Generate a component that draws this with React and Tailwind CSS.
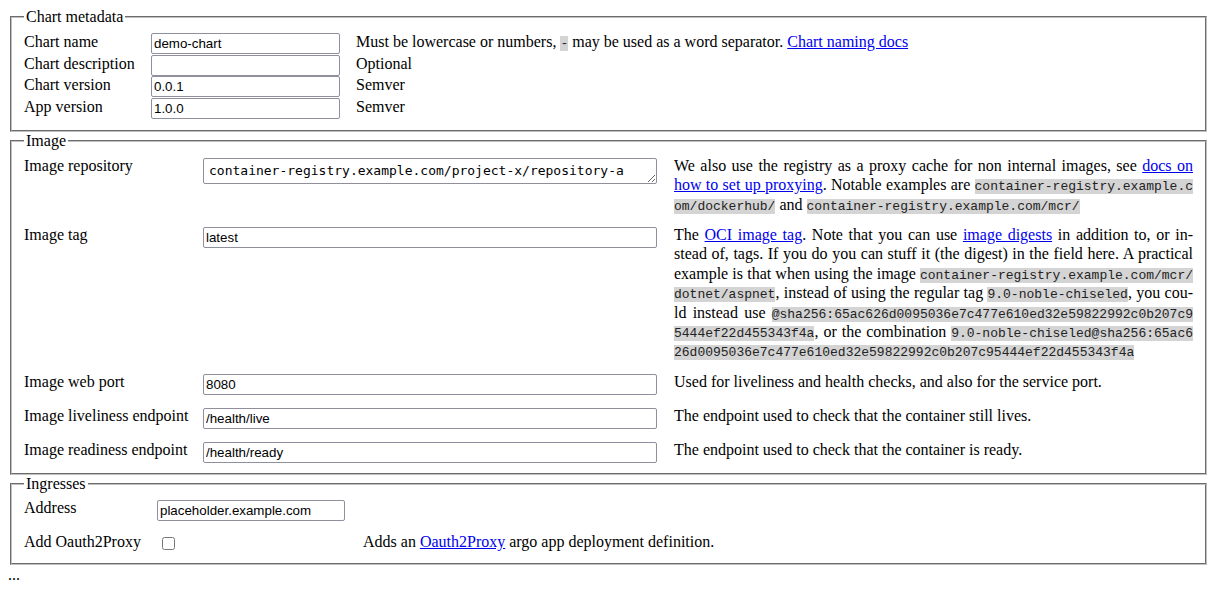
const serif = "font-['Liberation_Serif','Times_New_Roman',serif]";

function Code({ children }) {
  return (
    <code className="font-['Liberation_Mono','Courier_New',monospace] text-[13px] leading-[10px] bg-[#d4d4d4] text-[#222] break-all">
      {children}
    </code>
  );
}

function A({ children }) {
  return (
    <a href="#" className="text-[#0000ee] underline">
      {children}
    </a>
  );
}

function TextInput({ value, className = "" }) {
  return (
    <input
      type="text"
      defaultValue={value}
      className={`h-[21px] px-[2px] py-[1px] border border-[#8f8f9d] rounded-[2px] bg-white text-black font-['Liberation_Sans',Arial,sans-serif] text-[13.33px] leading-[15px] ${className}`}
    />
  );
}

function Fieldset({ legend, className = "", children }) {
  return (
    <fieldset className={`mx-[2px] px-3 pb-[10px] border-2 border-[#c0c0c0] [border-style:groove] ${className}`}>
      <legend className="px-[2px] leading-[18px]">{legend}</legend>
      {children}
    </fieldset>
  );
}

export default function App() {
  const meta = [
    {
      label: "Chart name",
      value: "demo-chart",
      desc: (
        <>
          Must be lowercase or numbers, <Code>-</Code> may be used as a word separator. <A>Chart naming docs</A>
        </>
      ),
    },
    { label: "Chart description", value: "", desc: "Optional" },
    { label: "Chart version", value: "0.0.1", desc: "Semver" },
    { label: "App version", value: "1.0.0", desc: "Semver" },
  ];

  return (
    <div lang="en" className={`${serif} text-[16px] text-black bg-white p-2 leading-[18px]`}>
      {/* CHART METADATA */}
      <Fieldset legend="Chart metadata">
        <div className="grid grid-cols-[111px_189px_1fr] gap-x-4 auto-rows-[21.7px] pt-[7px]">
          {meta.map((row) => (
            <div key={row.label} className="contents">
              <div className="leading-[18px] whitespace-nowrap">{row.label}</div>
              <TextInput value={row.value} className="w-[189px]" />
              <div className="leading-[18px]">{row.desc}</div>
            </div>
          ))}
        </div>
      </Fieldset>

      {/* IMAGE */}
      <Fieldset legend="Image">
        <div className="grid grid-cols-[162px_454px_1fr] gap-x-[17px] gap-y-[11px] pt-[6px] items-start">
          <div className="leading-[19.4px] whitespace-nowrap">Image repository</div>
          <textarea
            rows={1}
            defaultValue="container-registry.example.com/project-x/repository-a"
            className="mt-[2px] w-[454px] h-[26px] px-[5px] py-[3px] border border-[#8f8f9d] rounded-[2px] font-['DejaVu_Sans_Mono',monospace] text-[13px] leading-[18px] whitespace-nowrap overflow-hidden"
          />
          <div className="leading-[19.4px] text-justify hyphens-manual">
            We also use the registry as a proxy cache for non internal images, see <A>docs on how to set up proxying</A>. Notable examples are <Code>container-registry.example.com/dockerhub/</Code> and <Code>container-registry.example.com/mcr/</Code>
          </div>

          <div className="leading-[19.4px] whitespace-nowrap">Image tag</div>
          <TextInput value="latest" className="mt-[2px] w-[454px]" />
          <div className="leading-[19.4px] text-justify hyphens-manual">
            The <A>OCI image tag</A>. Note that you can use <A>image digests</A> in addition to, or in{"\u00AD"}stead of, tags. If you do you can stuff it (the digest) in the field here. A practical example is that when using the image <Code>container-registry.example.com/mcr/dotnet/aspnet</Code>, instead of using the regular tag <Code>9.0-noble-chiseled</Code>, you cou{"\u00AD"}ld instead use <Code>@sha256:65ac626d0095036e7c477e610ed32e59822992c0b207c95444ef22d455343f4a</Code>, or the combination <Code>9.0-noble-chiseled@sha256:65ac626d0095036e7c477e610ed32e59822992c0b207c95444ef22d455343f4a</Code>
          </div>

          {[
            ["Image web port", "8080", "Used for liveliness and health checks, and also for the service port."],
            ["Image liveliness endpoint", "/health/live", "The endpoint used to check that the container still lives."],
            ["Image readiness endpoint", "/health/ready", "The endpoint used to check that the container is ready."],
          ].map(([label, value, desc]) => (
            <div key={label} className="contents">
              <div className="leading-[19.4px] whitespace-nowrap">{label}</div>
              <TextInput value={value} className="mt-[2px] w-[454px]" />
              <div className="leading-[19.4px]">{desc}</div>
            </div>
          ))}
        </div>
      </Fieldset>

      {/* INGRESSES */}
      <Fieldset legend="Ingresses">
        <div className="grid grid-cols-[115px_188px_1fr] gap-x-[18px] gap-y-[11px] pt-[5px] items-start">
          <div className="leading-[19.4px] whitespace-nowrap">Address</div>
          <TextInput value="placeholder.example.com" className="mt-[2px] w-[188px]" />
          <div />

          <div className="leading-[19.4px] whitespace-nowrap">Add Oauth2Proxy</div>
          <div className="h-[21px]">
            <input type="checkbox" className="mt-[5px] ml-[5px] w-[13px] h-[13px]" />
          </div>
          <div className="leading-[19.4px]">
            Adds an <A>Oauth2Proxy</A> argo app deployment definition.
          </div>
        </div>
      </Fieldset>

      <div className="leading-[18px] pt-[1px]">...</div>
    </div>
  );
}
